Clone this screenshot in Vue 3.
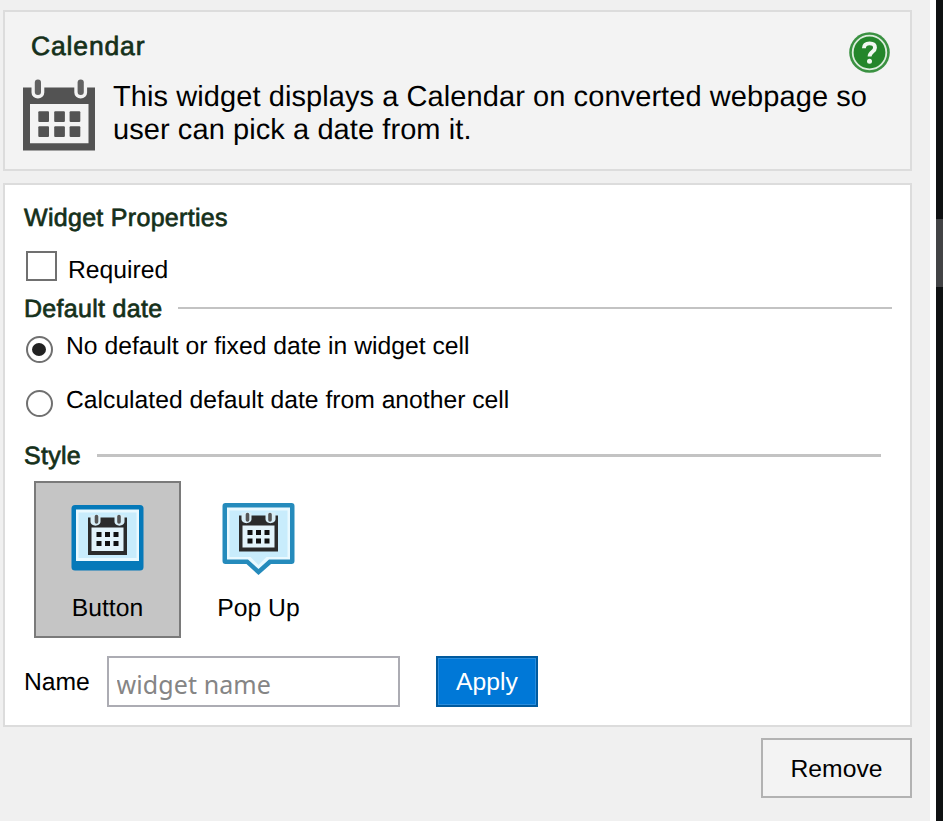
<script setup>
import { ref } from 'vue'

const required = ref(false)
const source = ref('fixed')
const style = ref('button')
const name = ref('')
const sources = [
  { id: 'fixed', label: 'No default or fixed date in widget cell' },
  { id: 'calculated', label: 'Calculated default date from another cell' },
]
const columns = [15.3, 31.2, 46.6]
const rows = [32.3, 47.3]
</script>

<template>
  <div class="window">
    <main class="pane">
      <header class="card intro">
        <div class="intro-top">
          <h1 class="heading title">Calendar</h1>
          <svg class="help" viewBox="0 0 41 41">
            <circle cx="20.5" cy="20.5" r="20.3" fill="#3a9141" />
            <circle cx="20.5" cy="20.5" r="16.8" fill="#24862b" stroke="#dceddd" stroke-width="1.8" />
            <path d="M14.9 16.2C15 12.7 17.3 11.4 20.6 11.4c3.5 0 5.4 1.7 5.4 4.3 0 4.2-5.4 4-5.4 8.8" fill="none" stroke="#f1f8f1" stroke-width="3.9" />
            <circle cx="20.5" cy="29.2" r="2.5" fill="#f1f8f1" />
          </svg>
        </div>
        <div class="intro-body">
          <svg class="calendar" viewBox="0 0 72 73">
            <path d="M0 8.5h72v63H0z" fill="#535353" />
            <path d="M8.5 7.5h12.8v6a6.4 6 0 0 1-12.8 0zM51.3 7.5h12.8v6a6.4 6 0 0 1-12.8 0z" fill="#f3f3f3" />
            <rect x="11.8" y="0.5" width="6.2" height="15.5" rx="3" fill="#626262" />
            <rect x="54.6" y="0.5" width="6.2" height="15.5" rx="3" fill="#626262" />
            <path d="M7 25h58.5v39.3H7z" fill="#f3f3f3" />
            <template v-for="y in rows" :key="y">
              <rect v-for="x in columns" :key="x" :x="x" :y="y" width="10.7" height="10.7" rx="1" fill="#535353" />
            </template>
          </svg>
          <p class="description">This widget displays a Calendar on converted webpage so<br>user can pick a date from it.</p>
        </div>
      </header>

      <section class="card properties">
        <h2 class="heading props-title">Widget Properties</h2>
        <label class="check-row" @click="required = !required">
          <span class="checkbox"></span><span class="label">Required</span>
        </label>
        <div class="divider">
          <h2 class="heading">Default date</h2><span class="line"></span>
        </div>
        <div class="radios">
          <label v-for="s in sources" :key="s.id" class="radio-row" @click="source = s.id">
            <span class="radio" :class="{ on: source === s.id }"></span><span class="label">{{ s.label }}</span>
          </label>
        </div>
        <div class="divider style-divider">
          <h2 class="heading">Style</h2><span class="line"></span>
        </div>
        <div class="tiles">
          <div class="tile" :class="{ selected: style === 'button' }" @click="style = 'button'">
            <svg class="tile-icon" viewBox="0 0 72 72">
              <rect y="2" width="72" height="65.5" rx="3.5" fill="#0579b9" />
              <rect x="4.5" y="6.5" width="63" height="51.5" fill="#e9f9ff" />
              <rect x="7" y="9.5" width="58" height="45.5" fill="#c8ecfc" />
              <g transform="translate(0 2)">
                <path d="M16.5 12.5h39V50h-39z" fill="#2b2b2b" />
                <path d="M20 22.5h32V46H20z" fill="#e3f4fb" />
                <path d="M19 10h10v6.5c0 5.5-10 5.5-10 0zM43 10h10v6.5c0 5.5-10 5.5-10 0z" fill="#d7edf6" />
                <path d="M25 11.5v5.5M47.5 11.5v5.5" stroke="#555" stroke-width="3.6" stroke-linecap="round" />
                <path d="M25 27h5v5h-5zM33.5 27h5v5h-5zM42 27h5v5h-5zM25 36h5v5h-5zM33.5 36h5v5h-5zM42 36h5v5h-5z" fill="#111" />
              </g>
            </svg>
            <span class="label">Button</span>
          </div>
          <div class="tile" :class="{ selected: style === 'popup' }" @click="style = 'popup'">
            <svg class="tile-icon" viewBox="0 0 72 72">
              <path d="M3 0h66q3 0 3 3v55q0 3-3 3H48.5L36 72 24 61H3q-3 0-3-3V3q0-3 3-3z" fill="#258bbc" />
              <path d="M4.5 4.5h63v52H46.5L36 66 25.5 56.5h-21z" fill="#e9f9ff" />
              <path d="M7 7.5h58V54H44l-8 8-8-8H7z" fill="#c8ecfc" />
              <path d="M16.5 12.5h39V48.5h-39z" fill="#2b2b2b" />
              <path d="M20 22.5h32v22H20z" fill="#e3f4fb" />
              <path d="M19 9.5h10V16c0 5.5-10 5.5-10 0zM43 9.5h10V16c0 5.5-10 5.5-10 0z" fill="#d7edf6" />
              <path d="M25 11.5v5.5M47.5 11.5v5.5" stroke="#555" stroke-width="3.6" stroke-linecap="round" />
              <path d="M25 27h5v5h-5zM33.5 27h5v5h-5zM42 27h5v5h-5zM25 35.5h5v5h-5zM33.5 35.5h5v5h-5zM42 35.5h5v5h-5z" fill="#111" />
            </svg>
            <span class="label">Pop Up</span>
          </div>
        </div>
        <div class="name-row">
          <span class="label name-label">Name</span>
          <input v-model="name" class="name-input" placeholder="widget name">
          <button class="apply">Apply</button>
        </div>
      </section>

      <footer class="actions"><button class="remove">Remove</button></footer>
    </main>
    <aside class="scrollbar"><div class="thumb"></div></aside>
  </div>
</template>

<style>
body { margin: 0; overflow: hidden; }
</style>

<style scoped>
* { box-sizing: border-box; }
.window {
  display: flex;
  width: 943px;
  height: 821px;
  background: #fff;
  font-family: "Liberation Sans", Arial, sans-serif;
  font-size: 24.7px;
  color: #000;
  text-rendering: geometricPrecision;
}
.pane { width: 930px; height: 821px; padding: 10px 18px 0 3px; background: #f0f0f0; }
.card { border: 2px solid #dcdcdc; }
.heading {
  margin: 0;
  font-size: 25px;
  line-height: 28px;
  font-weight: 400;
  letter-spacing: 0.3px;
  color: #15301a;
  -webkit-text-stroke: 0.7px #15301a;
  white-space: nowrap;
}
.intro { height: 161px; padding: 20px 20px 0 18px; background: #f3f3f3; }
.intro-top { display: flex; justify-content: space-between; height: 47px; }
.title { padding-left: 8px; font-size: 26.5px; letter-spacing: 0.85px; }
.help { width: 41px; height: 41px; }
.intro-body { display: flex; }
.calendar { width: 72px; height: 73px; }
.description { margin: 2px 0 0 18px; font-size: 29px; line-height: 33px; letter-spacing: 0.08px; white-space: nowrap; }
.properties { height: 544px; margin-top: 12px; padding: 19px 18px 0 19px; background: #fff; }
.label { white-space: nowrap; line-height: 28px; }
.check-row { display: flex; height: 31px; margin: 19px 0 0 2px; }
.checkbox { width: 31px; height: 30px; margin-right: 11px; border: 2px solid #707070; }
.check-row .label { padding-top: 6px; }
.divider { display: flex; align-items: center; height: 28px; margin-top: 13px; }
.line { flex: 1; height: 2px; margin: 0 0 2px 16px; background: #c3c3c3; }
.radios { display: flex; flex-direction: column; gap: 26px; padding: 9px 0 0 2px; }
.radio-row { display: flex; height: 28px; }
.radio-row .label { padding-top: 1px; }
.radio { display: flex; width: 27px; height: 27px; margin: 4px 13px 0 0; border: 2px solid #707070; border-radius: 50%; flex: none; }
.radio.on::after { content: ""; width: 14px; height: 13px; margin: 5px 0 0 4px; border-radius: 50%; background: #222; }
.style-divider { margin-top: 28px; padding-right: 11px; }
.style-divider .line { height: 3px; }
.tiles { display: flex; gap: 4px; margin: 11px 0 0 10px; }
.tile { display: flex; flex-direction: column; align-items: center; width: 147px; height: 157px; padding-top: 20px; border: 2px solid transparent; }
.tile.selected { border-color: #7a7a7a; background: #c5c5c5; }
.tile-icon { width: 73px; height: 72px; }
.tile .label { margin-top: 20px; }
.name-row { display: flex; align-items: center; height: 51px; margin-top: 18px; }
.name-label { width: 83px; padding-top: 2px; }
.name-input {
  width: 293px;
  height: 51px;
  padding: 4px 8px 0 7.5px;
  border: 2px solid #acacb3;
  border-radius: 0;
  outline: none;
  background: #fff;
  font: 25px "Noto Sans", sans-serif;
  letter-spacing: 0.1px;
}
.name-input::placeholder { color: #858585; opacity: 1; }
.apply {
  width: 102px;
  height: 51px;
  margin-left: 36px;
  padding: 0;
  border: 2px solid #005a9e;
  box-shadow: inset 0 0 0 1px #2b8ddd;
  background: #0078d7;
  color: #fff;
  font: inherit;
}
.actions { display: flex; justify-content: flex-end; margin-top: 11px; }
.remove { width: 151px; height: 60px; padding: 2px 0 0; border: 2px solid #b2b2b2; background: #f3f3f3; color: #000; font: inherit; }
.scrollbar { width: 7px; height: 821px; margin-left: 6px; padding-top: 219px; background: #0f1112; }
.thumb { height: 68px; background: #424345; }
</style>
